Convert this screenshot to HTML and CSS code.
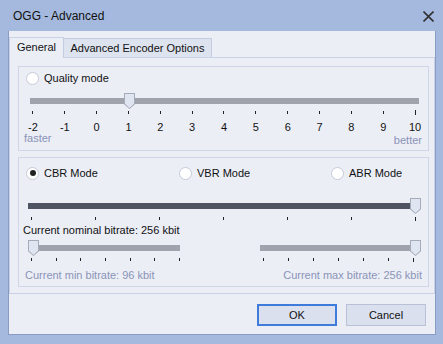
FILE: index.html
```html
<!DOCTYPE html>
<html lang="en">
<head>
  <meta charset="UTF-8">
  <title>OGG - Advanced</title>
  <link rel="stylesheet" href="styles.css">
</head>
<body>
  <div class="window">
    <div class="titlebar">
      <span class="title">OGG - Advanced</span>
      <svg class="close" width="11" height="11" viewBox="0 0 11 11">
        <path d="M0.5 0.5 L10.5 10.5 M10.5 0.5 L0.5 10.5" stroke="#333" stroke-width="1.6"/>
      </svg>
    </div>
    <div class="client">
      <div class="tabs">
        <div class="tab active">General</div>
        <div class="tab tab-encoder">Advanced Encoder Options</div>
      </div>
      <div class="panel">
        <!-- Quality mode -->
        <div class="group group-quality">
          <label class="radio-row">
            <span class="radio"></span>Quality mode
          </label>
          <div class="slider slider-quality">
            <div class="track"></div>
            <div class="thumb" style="left: 94px"></div>
          </div>
          <div class="scale">
            <div class="step"><i></i><span>-2</span></div>
            <div class="step"><i></i><span>-1</span></div>
            <div class="step"><i></i><span>0</span></div>
            <div class="step"><i></i><span>1</span></div>
            <div class="step"><i></i><span>2</span></div>
            <div class="step"><i></i><span>3</span></div>
            <div class="step"><i></i><span>4</span></div>
            <div class="step"><i></i><span>5</span></div>
            <div class="step"><i></i><span>6</span></div>
            <div class="step"><i></i><span>7</span></div>
            <div class="step"><i></i><span>8</span></div>
            <div class="step"><i></i><span>9</span></div>
            <div class="step last"><i></i><span>10</span></div>
          </div>
          <div class="ends">
            <span>faster</span>
            <span class="better">better</span>
          </div>
        </div>

        <!-- Bitrate modes -->
        <div class="group group-bitrate">
          <div class="modes">
            <label class="radio-row"><span class="radio checked"></span>CBR Mode</label>
            <label class="radio-row"><span class="radio"></span>VBR Mode</label>
            <label class="radio-row"><span class="radio"></span>ABR Mode</label>
          </div>
          <div class="slider slider-nominal">
            <div class="track dark"></div>
            <div class="thumb" style="left: 382px"></div>
          </div>
          <div class="ticks ticks-nominal">
            <i></i><i></i><i></i><i></i><i></i><i></i><i class="last"></i>
          </div>
          <div class="caption">Current nominal bitrate: 256 kbit</div>
          <div class="range-row">
            <div class="range range-min">
              <div class="slider">
                <div class="track"></div>
                <div class="thumb" style="left: 0px"></div>
              </div>
              <div class="ticks">
                <i></i><i></i><i></i><i></i><i></i><i></i><i></i>
              </div>
              <div class="caption muted">Current min bitrate: 96 kbit</div>
            </div>
            <div class="range range-max">
              <div class="slider">
                <div class="track"></div>
                <div class="thumb" style="left: 150px"></div>
              </div>
              <div class="ticks">
                <i></i><i></i><i></i><i></i><i></i><i></i><i class="last"></i>
              </div>
              <div class="caption muted">Current max bitrate: 256 kbit</div>
            </div>
          </div>
        </div>
      </div>
      <div class="buttons">
        <button class="btn default">OK</button>
        <button class="btn">Cancel</button>
      </div>
    </div>
  </div>
</body>
</html>
```

FILE: styles.css
```css
body {
  margin: 0;
  background: #a4b9dd;
  font-family: 'Liberation Sans', Arial, sans-serif;
  font-size: 11px;
  color: #111;
}
.window {
  width: 443px;
  height: 344px;
  box-sizing: border-box;
  background: #a4b9dd;
  padding: 0 7px 9px 8px;
}
.titlebar {
  height: 31px;
  display: flex;
  align-items: center;
  justify-content: space-between;
  padding: 0 2px 0 5px;
}
.title {
  font-size: 12px;
  color: #111;
}
.close {
  margin-top: 1px;
}
.client {
  height: 304px;
  box-sizing: border-box;
  background: #eceef6;
  border: 1px solid #8b9cc4;
  border-top: none;
  padding: 6px 0 0 0;
}
.tabs {
  display: flex;
  align-items: flex-end;
  height: 20px;
  position: relative;
  z-index: 1;
}
.tab {
  height: 19px;
  box-sizing: border-box;
  text-align: center;
  line-height: 18px;
  background: #dde3ef;
  border: 1px solid #c4ccdf;
  border-bottom: none;
}
.tab.active {
  width: 55px;
  height: 21px;
  margin-bottom: -1px;
  background: #eceef6;
  border-color: #c9d1e4;
  line-height: 19px;
}
.tab-encoder {
  width: 149px;
  margin-left: -1px;
}
.panel {
  height: 237px;
  box-sizing: border-box;
  border: 1px solid #c9d1e4;
  padding: 8px 5px 0 8px;
}
.group {
  border: 1px solid #cfd6e8;
  position: relative;
}
.group-quality {
  height: 85px;
  box-sizing: border-box;
}
.group-bitrate {
  height: 130px;
  box-sizing: border-box;
  margin-top: 6px;
}
.radio-row {
  display: flex;
  align-items: center;
  height: 14px;
  gap: 5px;
  flex-shrink: 0;
}
.radio {
  width: 11px;
  height: 11px;
  border-radius: 50%;
  background: #fff;
  border: 1px solid #c6cbd8;
  display: flex;
  align-items: center;
  justify-content: center;
}
.radio.checked::after {
  content: '';
  width: 6px;
  height: 6px;
  border-radius: 50%;
  background: #222;
}
.group-quality .radio-row {
  margin: 4px 0 0 7px;
}
.slider {
  position: relative;
  height: 17px;
}
.track {
  position: absolute;
  left: 0;
  right: 0;
  top: 5px;
  height: 6px;
  background: #a0a3ac;
}
.track.dark {
  background: #4f5462;
}
.thumb {
  position: absolute;
  top: 0;
  width: 11px;
  height: 16px;
}
.thumb::before {
  content: '';
  position: absolute;
  inset: 0;
  background: #a5abb9;
  clip-path: polygon(0 0, 100% 0, 100% 70%, 50% 100%, 0 70%);
}
.thumb::after {
  content: '';
  position: absolute;
  inset: 1px;
  background: #dfe5f1;
  clip-path: polygon(0 0, 100% 0, 100% 70%, 50% 100%, 0 70%);
}
.slider-quality {
  margin: 8px 9px 0 11px;
}
.scale {
  display: grid;
  grid-template-columns: repeat(13, 1fr);
  margin: 1px -3px 0 -2px;
}
.step {
  display: flex;
  flex-direction: column;
  align-items: center;
}
.step i {
  width: 1px;
  height: 3px;
  background: #222;
  margin-bottom: 7px;
}
.step.last i {
  height: 5px;
  margin-top: -1px;
  margin-bottom: 6px;
}
.step span {
  line-height: 12px;
}
.ends {
  display: flex;
  justify-content: space-between;
  line-height: 11px;
  color: #8a93b7;
  padding: 0 6px 0 5px;
}
.better {
  margin-top: 2px;
}
.modes {
  display: flex;
  margin: 8px 0 0 7px;
}
.modes .radio-row {
  width: 153px;
}
.modes .radio-row:nth-child(2) {
  width: 152px;
}
.modes .radio-row:last-child {
  width: auto;
}
.slider-nominal {
  margin: 18px 7px 0 9px;
}
.ticks {
  display: flex;
  justify-content: space-between;
  height: 4px;
  align-items: flex-start;
}
.ticks i {
  display: block;
  width: 1px;
  height: 3px;
  background: #222;
}
.ticks i.last {
  height: 4px;
}
.ticks-nominal {
  margin: 2px 12px 0 12px;
}
.caption {
  line-height: 14px;
  margin: 2px 0 0 4px;
  white-space: nowrap;
}
.muted {
  color: #8a94b6;
}
.range-row {
  display: flex;
  justify-content: space-between;
  margin-top: 3px;
}
.range-min {
  width: 152px;
  margin-left: 9px;
}
.range-min .ticks {
  margin: 1px 0 0 3px;
}
.range-min .caption {
  margin: 6px 0 0 -3px;
}
.range-max {
  width: 159px;
  margin-right: 9px;
}
.range-max .ticks {
  margin: 1px 5px 0 3px;
}
.range-max .caption {
  margin: 6px 0 0 0;
  direction: rtl;
  text-align: right;
  position: relative;
  left: 3px;
}
.buttons {
  display: flex;
  justify-content: flex-end;
  gap: 9px;
  margin: 10px 9px 0 0;
}
.btn {
  width: 80px;
  height: 22px;
  font-family: inherit;
  font-size: 11px;
  color: #111;
  background: #dae0ee;
  border: 1px solid #b8c1d7;
  padding: 0;
}
.btn.default {
  border: 2px solid #3e7bdb;
}
```
